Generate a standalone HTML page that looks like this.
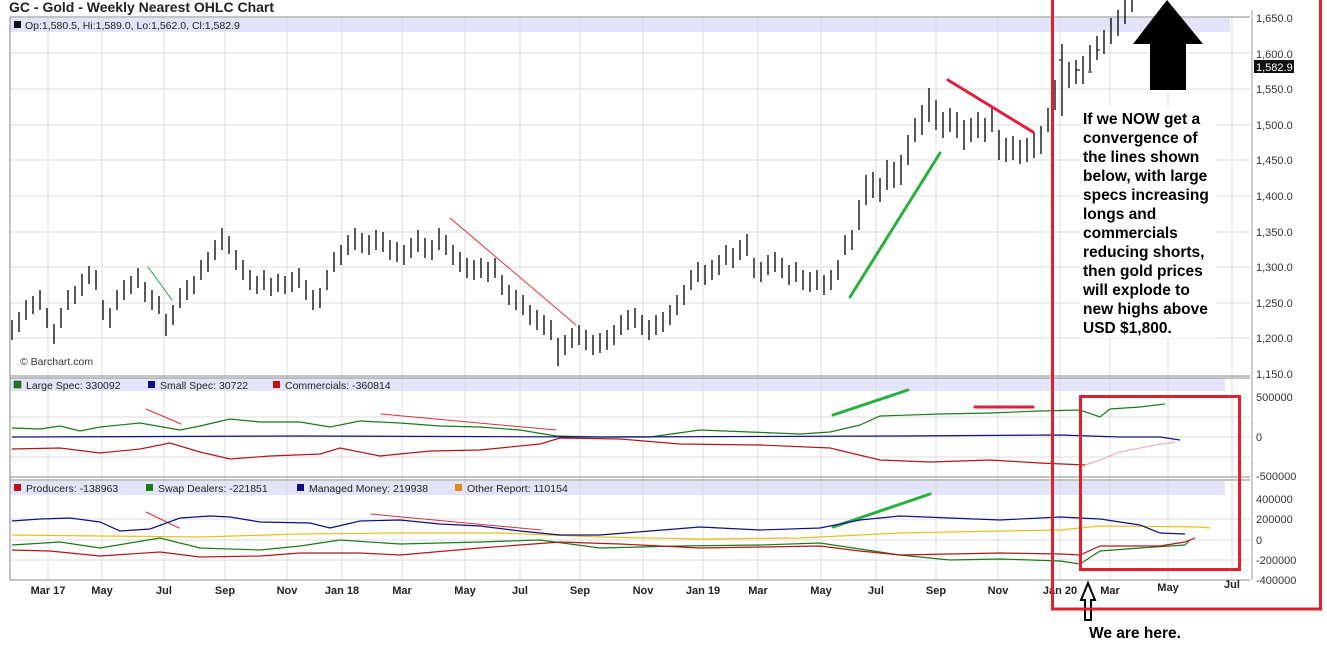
<!DOCTYPE html>
<html><head><meta charset="utf-8"><style>
html,body{margin:0;padding:0;background:#fff;width:1327px;height:653px;overflow:hidden}
svg{display:block;font-family:"Liberation Sans",Arial,sans-serif}
</style></head><body>
<svg width="1327" height="653" viewBox="0 0 1327 653" xmlns="http://www.w3.org/2000/svg">
<text x="9" y="12" font-size="14" font-weight="bold" fill="#222">GC - Gold - Weekly Nearest OHLC Chart</text>
<!-- bands -->
<rect x="10" y="18" width="1220" height="14" fill="#e3e3fa"/>
<rect x="10" y="378" width="1215" height="13" fill="#e3e3fa"/>
<rect x="10" y="481" width="1215" height="14" fill="#e3e3fa"/>
<!-- grid -->
<g stroke="#dcdcdc" stroke-width="1">
<path d="M48 17V580M102 17V580M164 17V580M225 17V580M287 17V580M342 17V580M402 17V580M465 17V580M520 17V580M580 17V580M643 17V580M703 17V580M758 17V580M821 17V580M876 17V580M936 17V580M998 17V580M1060 17V580M1110 17V580M1168 17V580M1232 17V580"/>
<path d="M10 53H1250M10 89H1250M10 125H1250M10 160H1250M10 196H1250M10 232H1250M10 267H1250M10 303H1250M10 338H1250"/>
<path d="M10 417H1250M10 437H1250M10 457H1250M10 519H1250M10 540H1250M10 560H1250"/>
</g>
<!-- frames -->
<g stroke="#888" fill="none">
<path d="M10 17H1250M10 17V580H1250M10 376H1250M10 378H1250M10 477H1250M10 480H1250"/>
<path d="M1252 10V580" stroke="#999"/>
</g>
<g font-size="10.5" fill="#222">
<rect x="14" y="21" width="7" height="7" fill="#111"/>
<text x="25" y="29">Op:1,580.5, Hi:1,589.0, Lo:1,562.0, Cl:1,582.9</text>
<text x="20" y="365" fill="#333">© Barchart.com</text>
<rect x="14" y="381" width="7" height="7" fill="#1a7a1a" stroke="#333" stroke-width=".5"/><text x="26" y="389">Large Spec: 330092</text>
<rect x="148" y="381" width="7" height="7" fill="#101080"/><text x="160" y="389">Small Spec: 30722</text>
<rect x="273" y="381" width="7" height="7" fill="#c01010"/><text x="285" y="389">Commercials: -360814</text>
<rect x="14" y="484" width="7" height="7" fill="#c01010"/><text x="26" y="492">Producers: -138963</text>
<rect x="146" y="484" width="7" height="7" fill="#1a7a1a"/><text x="158" y="492">Swap Dealers: -221851</text>
<rect x="297" y="484" width="7" height="7" fill="#101080"/><text x="309" y="492">Managed Money: 219938</text>
<rect x="455" y="484" width="7" height="7" fill="#e08a10"/><text x="467" y="492">Other Report: 110154</text>
</g>
<!-- price bars -->
<path fill="none" stroke="#000" stroke-width="1.3" d="M12 320V340M19 312V332M26 300V320M33 296V314M40 290V310M47 308V328M54 324V344M61 308V328M68 290V310M75 286V304M82 274V296M89 266V284M96 270V290M103 300V320M110 308V328M117 290V310M124 280V300M131 276V294M138 268V288M145 282V302M152 290V310M159 296V314M166 314V336M173 305V325M180 288V308M187 280V300M194 276V294M201 260V280M208 252V272M215 240V260M222 228V250M229 236V254M236 250V270M243 260V280M250 270V290M257 276V294M264 270V290M271 278V296M278 274V292M285 276V294M292 272V292M299 268V288M306 280V300M313 290V310M320 288V308M327 270V290M334 252V272M341 245V265M348 235V255M355 228V250M362 233V253M369 235V255M376 230V250M383 232V252M390 240V260M397 242V262M404 245V265M411 238V258M418 230V252M425 238V258M432 240V260M439 228V250M446 235V255M453 245V265M460 252V272M467 258V278M474 260V280M481 258V278M488 262V282M495 258V278M502 275V295M509 285V305M516 290V310M523 295V315M530 305V325M537 310V330M544 315V335M551 320V340M558 338V366M565 335V355M572 328V348M579 325V345M586 330V350M593 335V355M600 333V353M607 330V350M614 325V345M621 315V335M628 310V330M635 308V328M642 315V335M649 320V340M656 315V335M663 312V332M670 305V325M677 295V315M684 285V305M691 270V290M698 262V282M705 265V285M712 260V280M719 255V275M726 245V265M733 248V268M740 240V260M747 234V256M754 258V278M761 262V282M768 255V275M775 252V272M782 258V278M789 265V285M796 262V282M803 270V290M810 272V292M817 270V290M824 275V295M831 270V290M838 260V280M845 235V255M852 230V250M859 200V230M866 175V205M873 172V198M880 178V202M887 160V190M894 162V188M901 155V185M908 135V165M915 118V142M922 105V135M929 88V122M936 100V130M943 112V138M950 108V132M957 112V138M964 120V150M971 118V142M978 112V138M985 118V142M992 108V132M999 130V160M1006 138V162M1013 136V160M1020 140V164M1027 138V162M1034 132V158M1041 126V154M1048 108V132M1055 80V110M1062 44V116M1069 62V88M1076 60V84M1083 56V84M1090 45V71M1097 36V60M1104 30V54M1111 18V44M1118 10V36M1125 0V24M1132 0V12"/>
<path fill="none" stroke="#000" stroke-width="1" d="M1059 60H1062V52M1076 70H1080M1088 72H1092M1097 50H1100"/>
<!-- annotation lines -->
<g fill="none" stroke-linecap="round">
<path d="M148 267L172 300" stroke="#2a9a4a" stroke-width="1"/>
<path d="M450 218L576 325" stroke="#e0303a" stroke-width="1"/>
<path d="M850 297L940 153" stroke="#28b040" stroke-width="3"/>
<path d="M948 80L1033 132" stroke="#e0203a" stroke-width="3"/>
<path d="M146 409L181 424M381 414L556 430M146 512L179 528M371 514L541 530" stroke="#d8303a" stroke-width="1"/>
<path d="M833 415L908 390M833 527L930 494" stroke="#28b040" stroke-width="3"/>
<path d="M975 407L1033 407" stroke="#e0203a" stroke-width="3"/>
</g>
<!-- COT panel 1 -->
<g fill="none" stroke-width="1.2">
<polyline stroke="#1a7a1a" points="12,428 40,429 60,426 80,431 100,427 140,423 180,430 200,426 230,419 260,422 300,422 330,427 360,421 400,423 440,426 480,427 520,430 556,436 600,437 650,437 700,430 750,432 800,434 830,432 860,425 880,416 940,414 990,413 1040,411 1080,410 1100,417 1110,409 1140,407 1165,404"/>
<polyline stroke="#101080" points="12,437 300,436 600,437 900,436 1060,435 1120,437 1160,437 1180,440"/>
<polyline stroke="#b01818" points="12,449 60,448 100,453 140,449 170,443 200,452 230,459 270,456 320,454 340,448 380,456 430,451 480,450 540,444 560,438 620,439 680,444 760,445 830,448 880,460 930,462 990,460 1040,463 1085,465"/>
<polyline stroke="#eab0b8" points="1085,465 1100,460 1120,452 1150,446 1175,442"/>
<!-- panel 2 -->
<polyline stroke="#e8c020" points="12,535 100,536 200,537 300,534 400,533 500,533 600,537 700,539 800,538 900,533 1000,531 1060,530 1100,526 1200,527 1210,528"/>
<polyline stroke="#101080" points="12,521 40,519 70,518 100,522 120,531 150,529 180,518 210,516 230,517 260,522 310,523 330,528 360,521 400,520 440,524 480,526 520,531 560,535 600,535 650,531 700,527 760,530 820,528 860,520 900,516 950,518 1000,520 1060,517 1100,519 1140,525 1160,533 1185,534"/>
<polyline stroke="#1a7a1a" points="12,545 60,542 100,548 160,538 200,548 260,550 300,546 340,540 400,544 480,542 540,540 600,548 680,546 760,545 820,543 900,555 950,560 1000,559 1060,561 1080,564 1100,551 1140,548 1185,545 1190,540"/>
<polyline stroke="#b01818" points="12,550 50,551 100,556 160,552 200,557 260,556 300,553 360,553 400,555 480,548 560,542 620,544 700,548 760,547 820,546 860,551 900,555 1000,553 1060,554 1080,555 1100,546 1160,546 1185,542 1195,538"/>
</g>
<!-- x axis labels -->
<g font-size="11" font-weight="bold" fill="#222" text-anchor="middle">
<text x="48" y="594">Mar 17</text><text x="102" y="594">May</text><text x="164" y="594">Jul</text><text x="225" y="594">Sep</text><text x="287" y="594">Nov</text><text x="342" y="594">Jan 18</text><text x="402" y="594">Mar</text><text x="465" y="594">May</text><text x="520" y="594">Jul</text><text x="580" y="594">Sep</text><text x="643" y="594">Nov</text><text x="703" y="594">Jan 19</text><text x="758" y="594">Mar</text><text x="821" y="594">May</text><text x="876" y="594">Jul</text><text x="936" y="594">Sep</text><text x="998" y="594">Nov</text><text x="1060" y="594">Jan 20</text><text x="1110" y="594">Mar</text><text x="1168" y="591">May</text><text x="1232" y="588">Jul</text>
</g>
<!-- y axis labels -->
<g font-size="11" fill="#333">
<text x="1256" y="22">1,650.0</text><text x="1256" y="58">1,600.0</text><text x="1256" y="93">1,550.0</text><text x="1256" y="129">1,500.0</text><text x="1256" y="164">1,450.0</text><text x="1256" y="200">1,400.0</text><text x="1256" y="236">1,350.0</text><text x="1256" y="271">1,300.0</text><text x="1256" y="307">1,250.0</text><text x="1256" y="342">1,200.0</text><text x="1256" y="378">1,150.0</text>
<rect x="1254" y="60" width="40" height="13" fill="#111"/><text x="1256" y="71" fill="#fff">1,582.9</text>
<text x="1256" y="401">500000</text><text x="1256" y="441">0</text><text x="1256" y="480">-500000</text>
<text x="1256" y="503">400000</text><text x="1256" y="523">200000</text><text x="1256" y="544">0</text><text x="1256" y="564">-200000</text><text x="1256" y="584">-400000</text>
</g>
<!-- annotations -->
<rect x="1080" y="106" width="136" height="232" fill="#fff"/>
<g font-size="15.5" font-weight="bold" fill="#000">
<text x="1083" y="124">If we NOW get a</text><text x="1083" y="143">convergence of</text><text x="1083" y="162">the lines shown</text><text x="1083" y="181">below, with large</text><text x="1083" y="200">specs increasing</text><text x="1083" y="219">longs and</text><text x="1083" y="238">commercials</text><text x="1083" y="257">reducing shorts,</text><text x="1083" y="276">then gold prices</text><text x="1083" y="295">will explode to</text><text x="1083" y="314">new highs above</text><text x="1083" y="333">USD $1,800.</text>
<text x="1089" y="638">We are here.</text>
</g>
<polygon points="1167,0 1203,44 1186,44 1186,90 1150,90 1150,44 1133,44" fill="#000"/>
<polygon points="1088,583 1095,600 1091,600 1091,620 1085,620 1085,600 1081,600" fill="#fff" stroke="#000" stroke-width="2"/>
<rect x="1052.5" y="-5" width="268" height="614" fill="none" stroke="#e0202a" stroke-width="3"/>
<rect x="1080.5" y="396.5" width="159" height="173" fill="none" stroke="#e0202a" stroke-width="3"/>
</svg>
</body></html>
